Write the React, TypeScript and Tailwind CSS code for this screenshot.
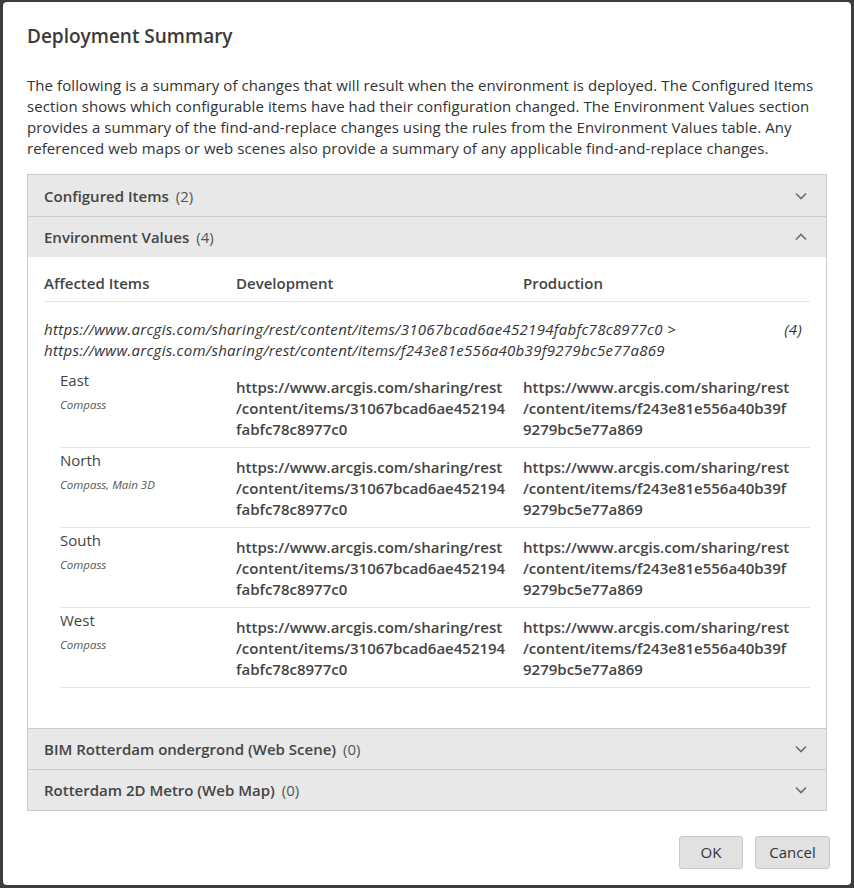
import React from "react";

const font = { fontFamily: '"Open Sans", "Noto Sans", sans-serif' };

function Chevron({ up }: { up?: boolean }) {
  return (
    <svg width="12" height="8" viewBox="0 0 12 8" className="shrink-0">
      <path
        d={up ? "M1 6.5 L6 1.5 L11 6.5" : "M1 1.5 L6 6.5 L11 1.5"}
        fill="none"
        stroke="#6b6b6b"
        strokeWidth="1.6"
      />
    </svg>
  );
}

function Header({ title, count, up, topBorder }: { title: string; count: number; up?: boolean; topBorder?: boolean }) {
  return (
    <div
      className={`h-[41px] flex items-center justify-between pl-[16px] pr-[19px] bg-[#e8e8e8] ${
        topBorder ? "border-t border-[#cbcbcb]" : ""
      }`}
    >
      <div className="text-[15px] leading-[21px] pt-[1px]">
        <span className="font-semibold text-[#444]">{title}</span>
        <span className="text-[#555] ml-[7px]">({count})</span>
      </div>
      <Chevron up={up} />
    </div>
  );
}

const rows = [
  { name: "East", sub: "Compass" },
  { name: "North", sub: "Compass, Main 3D" },
  { name: "South", sub: "Compass" },
  { name: "West", sub: "Compass" },
];

const dev = ["https://www.arcgis.com/sharing/rest", "/content/items/31067bcad6ae452194", "fabfc78c8977c0"];
const prod = ["https://www.arcgis.com/sharing/rest", "/content/items/f243e81e556a40b39f", "9279bc5e77a869"];

export default function App() {
  return (
    <div className="w-[854px] h-[888px] bg-[#3b3d3f] pt-[2px] pl-[3px]" style={font}>
      <div className="w-[848px] h-[883px] bg-white rounded-[4px] flex flex-col pl-[24px] pr-[24px] text-[#323232]">
        <h1 className="pt-[20px] text-[19px] leading-[28px] font-semibold text-[#3a3a3a]">Deployment Summary</h1>
        <p className="mt-[25px] text-[15px] leading-[21px] tracking-[0.08px] whitespace-nowrap">
          The following is a summary of changes that will result when the environment is deployed. The Configured Items
          <br />
          section shows which configurable items have had their configuration changed. The Environment Values section
          <br />
          provides a summary of the find-and-replace changes using the rules from the Environment Values table. Any
          <br />
          referenced web maps or web scenes also provide a summary of any applicable find-and-replace changes.
        </p>

        <div className="mt-[15px] w-[800px] border border-[#cbcbcb]">
          <Header title="Configured Items" count={2} />
          <Header title="Environment Values" count={4} up topBorder />
          <div className="bg-white pl-[16px] pr-[16px] pt-[16px] pb-[40px]">
            <div className="grid grid-cols-[192px_287px_287px] border-b border-[#e3e3e3] pb-[7px] text-[15px] leading-[21px] font-semibold text-[#444]">
              <div>Affected Items</div>
              <div>Development</div>
              <div>Production</div>
            </div>
            <div className="flex justify-between pt-[17px] pb-[7px] pr-[8px] italic text-[15px] leading-[21px] tracking-[0.3px] text-[#333] whitespace-nowrap">
              <div>
                https://www.arcgis.com/sharing/rest/content/items/31067bcad6ae452194fabfc78c8977c0 &gt;
                <br />
                https://www.arcgis.com/sharing/rest/content/items/f243e81e556a40b39f9279bc5e77a869
              </div>
              <div>(4)</div>
            </div>
            <div className="ml-[16px]">
              {rows.map((r) => (
                <div key={r.name} className="grid grid-cols-[176px_287px_287px] h-[80px] border-b border-[#e3e3e3]">
                  <div className="pt-[2px]">
                    <div className="text-[15px] leading-[21px] text-[#444]">{r.name}</div>
                    <div className="mt-[6px] text-[11.5px] leading-[15px] italic text-[#555]">{r.sub}</div>
                  </div>
                  <div className="flex flex-col justify-center pt-[1px] text-[15px] leading-[21px] font-semibold text-[#444] whitespace-nowrap">
                    {dev.map((l) => (
                      <div key={l}>{l}</div>
                    ))}
                  </div>
                  <div className="flex flex-col justify-center pt-[1px] text-[15px] leading-[21px] font-semibold text-[#444] whitespace-nowrap">
                    {prod.map((l) => (
                      <div key={l}>{l}</div>
                    ))}
                  </div>
                </div>
              ))}
            </div>
          </div>
          <Header title="BIM Rotterdam ondergrond (Web Scene)" count={0} topBorder />
          <Header title="Rotterdam 2D Metro (Web Map)" count={0} topBorder />
        </div>

        <div className="flex justify-end gap-[12px] mt-[25px] mr-[-3px]">
          <button className="w-[64px] h-[33px] rounded-[3px] border border-[#c6c6c6] bg-[#e1e1e1] text-[15px] text-[#333]">
            OK
          </button>
          <button className="w-[75px] h-[33px] rounded-[3px] border border-[#c6c6c6] bg-[#e1e1e1] text-[15px] text-[#333]">
            Cancel
          </button>
        </div>
      </div>
    </div>
  );
}
